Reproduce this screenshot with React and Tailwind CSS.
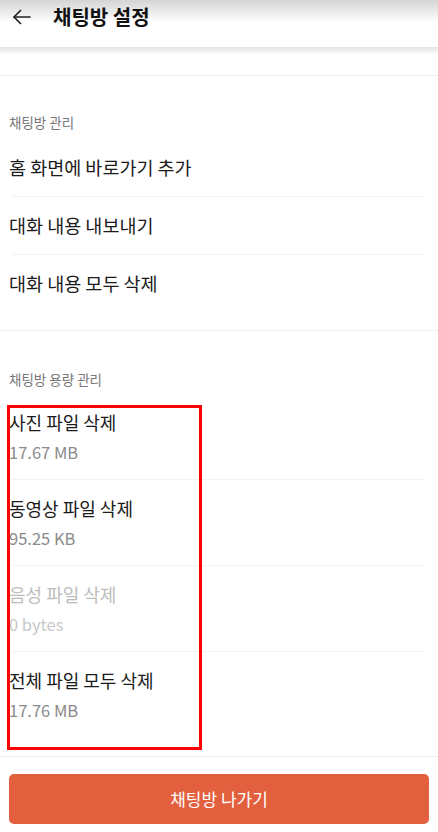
import React from 'react';

const FONT = { fontFamily: '"Noto Sans CJK KR", "Noto Sans", sans-serif' };

const ChatRow = ({ title, last }) => (
  <div className="flex flex-col">
    <div className="h-[57px] flex items-center px-[9px] text-[18.5px] text-[#1b1b1b]">{title}</div>
    {!last && <div className="mx-[12px] h-px bg-[#f3f3f3]" />}
  </div>
);

const StorageRow = ({ title, size, disabled, last }) => (
  <div className="flex flex-col">
    <div className={`px-[9px] pt-[16px] ${last ? 'pb-[36px]' : 'pb-[17px]'}`}>
      <div className={`text-[18px] leading-[24px] ${disabled ? 'text-[#bdbdbd]' : 'text-[#1b1b1b]'}`}>{title}</div>
      <div className={`mt-[8px] text-[16.5px] leading-[20px] ${disabled ? 'text-[#c8c8c8]' : 'text-[#8a8a8a]'}`}>{size}</div>
    </div>
    {!last && <div className="mx-[12px] h-px bg-[#f3f3f3]" />}
  </div>
);

export default function App() {
  const storage = [
    { title: '사진 파일 삭제', size: '17.67 MB' },
    { title: '동영상 파일 삭제', size: '95.25 KB' },
    { title: '음성 파일 삭제', size: '0 bytes', disabled: true },
    { title: '전체 파일 모두 삭제', size: '17.76 MB' },
  ];

  return (
    <div className="relative w-[438px] h-[832px] bg-white overflow-hidden" style={FONT}>
      {/* Header */}
      <div className="h-[47px] bg-[linear-gradient(to_bottom,#d4d4d4_0px,#ffffff_22px)]">
        <div className="flex items-center h-[33px]">
          <svg width="20" height="16" viewBox="0 0 20 16" className="ml-[12px]" fill="none" stroke="#222" strokeWidth="1.7" strokeLinecap="round" strokeLinejoin="round">
            <path d="M18 8H2" />
            <path d="M8.5 1.5L2 8l6.5 6.5" />
          </svg>
          <span className="ml-[21px] text-[20px] font-bold text-[#111]">채팅방 설정</span>
        </div>
      </div>
      <div className="h-[8px] bg-[linear-gradient(to_bottom,#e3e3e3,#ffffff)]" />
      <div className="h-[20px]" />
      <div className="h-px bg-[#efefef]" />

      {/* 채팅방 관리 */}
      <div className="px-[9px] pt-[38px] pb-[9px] text-[13.5px] leading-[16px] text-[#777]">채팅방 관리</div>
      <ChatRow title="홈 화면에 바로가기 추가" />
      <ChatRow title="대화 내용 내보내기" />
      <ChatRow title="대화 내용 모두 삭제" last />
      <div className="h-[18px]" />
      <div className="h-px bg-[#efefef]" />

      {/* 채팅방 용량 관리 */}
      <div className="px-[9px] pt-[40px] pb-[7px] text-[13.5px] leading-[16px] text-[#777]">채팅방 용량 관리</div>
      {storage.map((s, i) => (
        <StorageRow key={s.title} {...s} last={i === storage.length - 1} />
      ))}
      <div className="h-px bg-[#efefef]" />

      <div className="px-[9px] pt-[17px]">
        <button className="w-full h-[50px] rounded-[5px] bg-[#e3603f] text-white text-[17px]">채팅방 나가기</button>
      </div>

      {/* highlight box */}
      <div className="absolute left-[7px] top-[405px] w-[195px] h-[345px] border-[3px] border-[#ff0000]" />
    </div>
  );
}
